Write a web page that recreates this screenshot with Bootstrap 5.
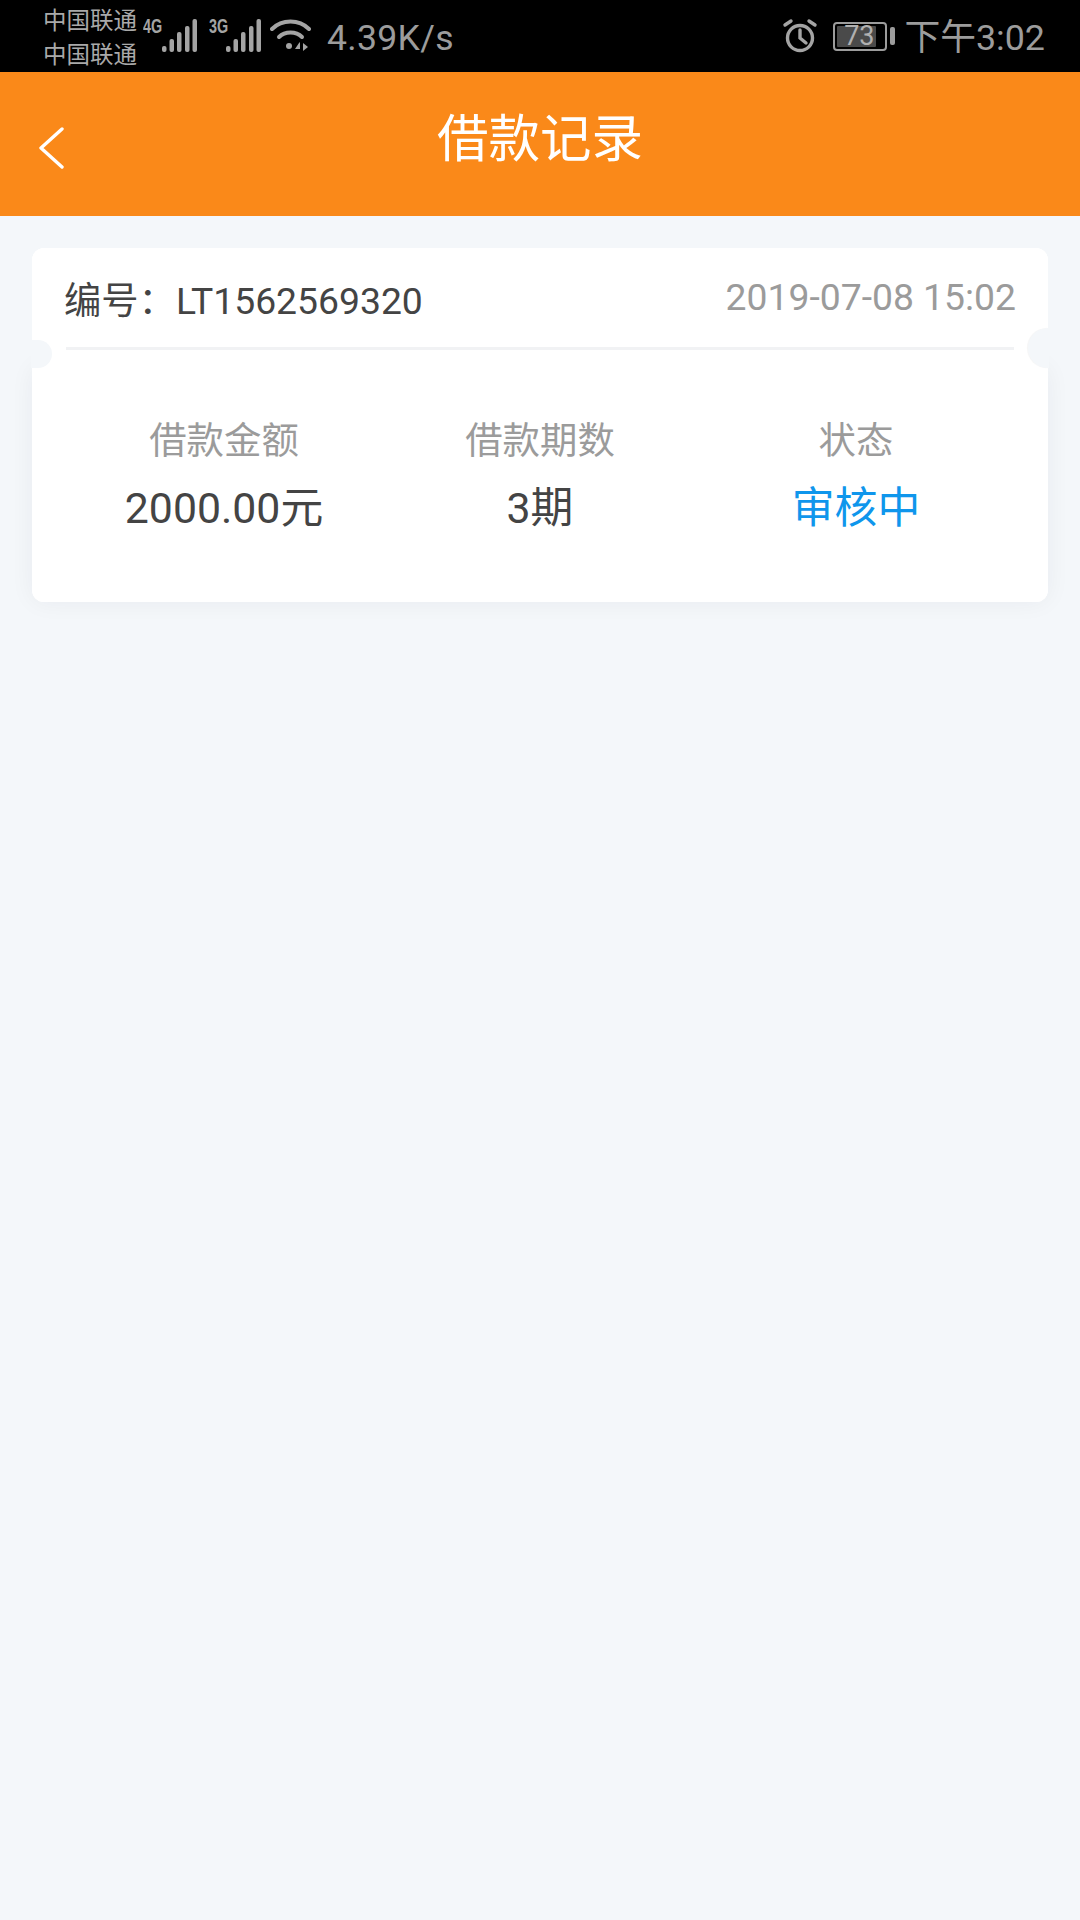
<!DOCTYPE html>
<html lang="zh-CN">
<head>
<meta charset="utf-8">
<title>借款记录</title>
<link href="https://cdn.jsdelivr.net/npm/bootstrap@5.3.0/dist/css/bootstrap.min.css" rel="stylesheet">
<style>
html,body{width:1080px;height:1920px;margin:0;background:#f4f7fa;overflow:hidden}
body{font-family:Roboto,"Noto Sans CJK SC",sans-serif}
.sbar{height:72px;background:#000;color:#9c9c9c;padding:0 35px 0 44px}
.carrier{width:96px;font-size:23.5px;line-height:34px;color:#a9a9a9;margin:3px 0 0 -1px}
.net{display:inline-block;font-family:"Liberation Sans",sans-serif;font-weight:700;font-size:20px;line-height:16px;color:#a4a4a4;width:19px;align-self:flex-start;margin-top:18px;transform:scaleX(.72);transform-origin:left center;white-space:nowrap}
.sig{margin-top:19px;align-self:flex-start}
.speed{font-size:35.6px;line-height:72px;margin-left:15px;padding-top:3px;letter-spacing:.3px}
.clock{font-size:35.8px;line-height:72px;margin-left:9px;padding-top:3px;color:#9c9c9c}
.batt{width:54px;height:29px;border:2px solid #9c9c9c;border-radius:4px;padding:2px;margin-left:15px;position:relative}
.battfill{background:#4a4a4a;width:39px;height:100%;border-radius:1px}
.battnum{font-size:27px;line-height:25px;color:#b0b0b0;position:absolute;left:5px;top:0;width:38px;text-align:center}
.nub{width:5px;height:18px;background:#9c9c9c;border-radius:2px;margin-left:3px}
.topbar{height:144px;background:#fa8919;color:#fff;display:grid;grid-template-columns:1fr auto 1fr;align-items:center;padding-left:38px}
.ttl{font-size:51.5px;font-weight:400;line-height:60px;margin:0 0 9px -38px}
.backic{margin-top:8px}
.page{padding:32px 32px 0 32px}
.ticket{position:relative;background:#fff;border-radius:12px;height:354px}
.ticket::before{content:"";position:absolute;left:0;right:0;top:118px;bottom:0;border-radius:12px;box-shadow:0 0 24px rgba(30,40,50,.055)}
.tinner{position:relative;z-index:1;background:#fff;border-radius:12px;height:100%}
.thead{height:102px;margin:0 34px 0 34px;border-bottom:3px solid #f1f2f4;color:#444}
.tid{font-size:37.3px;line-height:50px;margin:28px 0 0 -2px}
.tdate{font-size:37.3px;line-height:50px;color:#9b9b9b;margin:24px -2px 0 0}
.tcols{margin:0 2px;padding-top:66px}
.tcol{width:316px;text-align:center}
.tlab{font-size:37.4px;line-height:50px;color:#9b9b9b}
.tval{font-size:42.8px;line-height:60px;color:#444;margin-top:12px}
.tval.st{color:#0f96ec}
.notch{position:absolute;z-index:2;background:#f4f7fa}
.nl{left:-1px;top:92px;width:21px;height:28px;border-radius:0 14px 14px 0}
.nr{right:-1px;top:80px;width:21px;height:40px;border-radius:20px 0 0 20px;box-shadow:-1px 0 1px #f5f5f5}
</style>
</head>
<body>
<div class="sbar d-flex align-items-center">
  <div class="carrier"><div>中国联通</div><div>中国联通</div></div>
  <span class="net ms-1">4G</span>
  <svg width="36" height="34" viewBox="0 0 36 34" class="sig" fill="#a4a4a4"><rect x="0" y="27" width="4.5" height="6" rx="2"/><rect x="7.5" y="20" width="4.5" height="13" rx="2"/><rect x="15" y="13" width="4.5" height="20" rx="2"/><rect x="23" y="7" width="4.5" height="26" rx="2"/><rect x="30.5" y="0" width="4.5" height="33" rx="2"/></svg>
  <span class="net" style="margin-left:11px">3G</span>
  <svg width="36" height="34" viewBox="0 0 36 34" class="sig" style="margin-left:-2px" fill="#a4a4a4"><rect x="0" y="27" width="4.5" height="6" rx="2"/><rect x="7.5" y="20" width="4.5" height="13" rx="2"/><rect x="15" y="13" width="4.5" height="20" rx="2"/><rect x="23" y="7" width="4.5" height="26" rx="2"/><rect x="30.5" y="0" width="4.5" height="33" rx="2"/></svg>
  <svg width="42" height="36" viewBox="0 0 42 36" class="align-self-start" style="margin-top:18px;margin-left:8px" fill="none" stroke="#a4a4a4" stroke-width="4" stroke-linecap="round"><path d="M2 11C12 1 29 1 39 11"/><path d="M9 19C15 13 26 13 32 19"/><circle cx="19" cy="28" r="3" fill="#a4a4a4" stroke="none"/><path d="M29 25l-4 6h5v-7z M33 25v8l5-4z" fill="#a4a4a4" stroke="none"/></svg>
  <span class="speed">4.39K/s</span>
  <div class="flex-grow-1"></div>
  <svg width="36" height="36" viewBox="0 0 36 36" fill="none" stroke="#a4a4a4" stroke-width="3.4" stroke-linecap="round"><circle cx="18" cy="20" r="12.5"/><path d="M18 12v8l6 5"/><path d="M3 7l6-4M33 7l-6-4"/></svg>
  <div class="batt"><div class="battfill"></div><div class="battnum">73</div></div>
  <div class="nub"></div>
  <span class="clock">下午3:02</span>
</div>
<div class="topbar">
  <svg class="backic" width="26" height="42" viewBox="0 0 26 42" fill="none" stroke="#fff" stroke-width="3.4" stroke-linecap="round" stroke-linejoin="round"><path d="M24 2L3 21l21 19"/></svg>
  <h1 class="ttl">借款记录</h1>
</div>
<div class="page">
  <div class="ticket">
    <div class="tinner">
      <div class="thead d-flex justify-content-between">
        <div class="tid">编号：LT1562569320</div>
        <div class="tdate">2019-07-08 15:02</div>
      </div>
      <div class="tcols d-flex justify-content-center">
        <div class="tcol"><div class="tlab">借款金额</div><div class="tval">2000.00元</div></div>
        <div class="tcol"><div class="tlab">借款期数</div><div class="tval">3期</div></div>
        <div class="tcol"><div class="tlab">状态</div><div class="tval st">审核中</div></div>
      </div>
    </div>
    <div class="notch nl"></div>
    <div class="notch nr"></div>
  </div>
</div>
<script src="https://cdn.jsdelivr.net/npm/bootstrap@5.3.0/dist/js/bootstrap.bundle.min.js"></script>
</body>
</html>
